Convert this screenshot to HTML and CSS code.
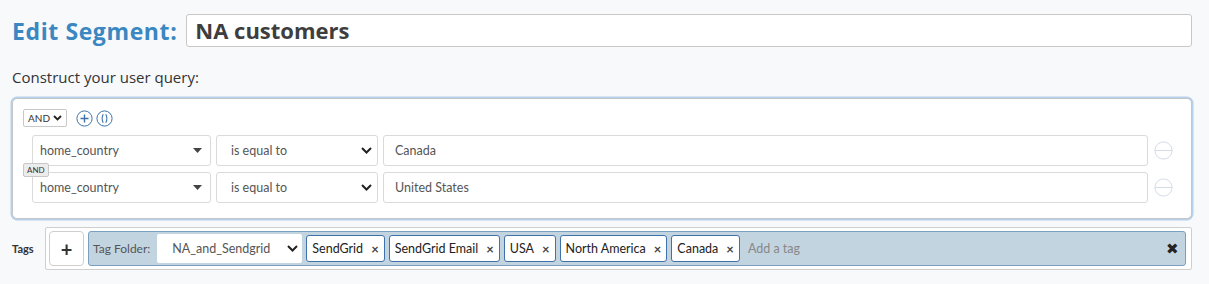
FILE: index.html
```html
<!DOCTYPE html>
<html lang="en">
<head>
    <meta charset="UTF-8">
    <title>Edit Segment</title>
    <link rel="stylesheet" href="styles.css">
</head>
<body>
    <!-- Titre + nom du segment -->
    <div class="header">
        <h1>Edit Segment:</h1>
        <div class="name-input">NA customers</div>
    </div>

    <p class="label">Construct your user query:</p>

    <!-- Constructeur de requete -->
    <div class="query-box">
        <div class="group-bar">
            <div class="mini-select">AND
                <svg width="9" height="6" viewBox="0 0 9 6"><path d="M1 1 L4.5 4.5 L8 1" fill="none" stroke="#222" stroke-width="1.8"/></svg>
            </div>
            <svg class="circle-icon" width="17" height="17" viewBox="0 0 17 17"><circle cx="8.5" cy="8.5" r="7.6" fill="none" stroke="#3d73a8" stroke-width="1"/><path d="M8.5 4.5 V12.5 M4.5 8.5 H12.5" stroke="#3d73a8" stroke-width="1.4"/></svg>
            <svg class="circle-icon" width="17" height="17" viewBox="0 0 17 17"><circle cx="8.5" cy="8.5" r="7.6" fill="none" stroke="#3d73a8" stroke-width="1"/><path d="M7.2 4.3 Q5 8.5 7.2 12.7 M9.8 4.3 Q12 8.5 9.8 12.7" fill="none" stroke="#3d73a8" stroke-width="1.1"/></svg>
        </div>

        <div class="rules">
            <span class="and-badge">AND</span>
            <div class="rule">
                <div class="field field-name">home_country
                    <svg width="9" height="5" viewBox="0 0 9 5"><path d="M0 0 H9 L4.5 5 Z" fill="#444"/></svg>
                </div>
                <div class="field field-op">is equal to
                    <svg width="11" height="7" viewBox="0 0 11 7"><path d="M1 1 L5.5 5.5 L10 1" fill="none" stroke="#222" stroke-width="2"/></svg>
                </div>
                <div class="field field-value">Canada</div>
                <svg class="minus" width="19" height="19" viewBox="0 0 19 19"><circle cx="9.5" cy="9.5" r="8.6" fill="none" stroke="#d3dbe6" stroke-width="1"/><path d="M1 9.5 H18" stroke="#d3dbe6" stroke-width="1"/></svg>
            </div>
            <div class="rule">
                <div class="field field-name">home_country
                    <svg width="9" height="5" viewBox="0 0 9 5"><path d="M0 0 H9 L4.5 5 Z" fill="#444"/></svg>
                </div>
                <div class="field field-op">is equal to
                    <svg width="11" height="7" viewBox="0 0 11 7"><path d="M1 1 L5.5 5.5 L10 1" fill="none" stroke="#222" stroke-width="2"/></svg>
                </div>
                <div class="field field-value">United States</div>
                <svg class="minus" width="19" height="19" viewBox="0 0 19 19"><circle cx="9.5" cy="9.5" r="8.6" fill="none" stroke="#d3dbe6" stroke-width="1"/><path d="M1 9.5 H18" stroke="#d3dbe6" stroke-width="1"/></svg>
            </div>
        </div>
    </div>

    <!-- Tags -->
    <div class="tags-row">
        <span class="tags-label">Tags</span>
        <div class="tags-box">
            <div class="add-btn">+</div>
            <div class="tag-bar">
                <span class="folder-label">Tag Folder:</span>
                <div class="folder-select">NA_and_Sendgrid
                    <svg width="11" height="7" viewBox="0 0 11 7"><path d="M1 1 L5.5 5.5 L10 1" fill="none" stroke="#222" stroke-width="2"/></svg>
                </div>
                <span class="tag">SendGrid <b>×</b></span>
                <span class="tag">SendGrid Email <b>×</b></span>
                <span class="tag">USA <b>×</b></span>
                <span class="tag">North America <b>×</b></span>
                <span class="tag">Canada <b>×</b></span>
                <span class="placeholder">Add a tag</span>
                <span class="clear">✖</span>
            </div>
        </div>
    </div>
</body>
</html>
```

FILE: styles.css
```css
body {
    font-family: Lato, "Open Sans", sans-serif;
    margin: 0;
    padding: 14px 17px 0 12px;
    background-color: #f8f9fb;
    color: #333;
}

/* En-tete */
.header {
    display: flex;
    align-items: center;
    gap: 9px;
}

h1 {
    margin: 0;
    font-family: "Open Sans", sans-serif;
    font-size: 23px;
    letter-spacing: 0.6px;
    font-weight: bold;
    color: #3a87c1;
    white-space: nowrap;
}

.name-input {
    flex: 1;
    height: 31px;
    line-height: 31px;
    border: 1px solid #c8c8c8;
    border-radius: 3px;
    background: white;
    padding-left: 8px;
    font-family: "Open Sans", sans-serif;
    font-size: 22px;
    font-weight: bold;
    color: #3e3e3e;
}

.label {
    margin: 20px 0 10px;
    font-family: "Open Sans", sans-serif;
    font-size: 15px;
    line-height: 21px;
    color: #333;
}

/* Boite de requete */
.query-box {
    background: white;
    border: 1px solid #c4c6c8;
    box-shadow: 0 0 0 1.5px #b7d0ec;
    border-radius: 5px;
    padding: 10px 18px 15px 10px;
}

.group-bar {
    display: flex;
    align-items: center;
    gap: 3px;
}

.mini-select {
    display: flex;
    align-items: center;
    gap: 3px;
    height: 16px;
    padding: 0 4px;
    border: 1px solid #c8c8c8;
    border-radius: 2px;
    font-size: 10px;
    color: #333;
    margin-right: 6px;
}

.rules {
    position: relative;
    margin: 8px 0 0 9px;
    display: flex;
    flex-direction: column;
    gap: 6px;
}

.and-badge {
    position: absolute;
    left: -9px;
    top: 28px;
    font-size: 8px;
    color: #333;
    background: #ececec;
    border: 1px solid #c8c8c8;
    border-radius: 2px;
    padding: 2px 3px;
    line-height: 8px;
}

.rule {
    display: flex;
    align-items: center;
    gap: 5px;
}

.field {
    box-sizing: border-box;
    height: 31px;
    border: 1px solid #dadada;
    border-radius: 3px;
    background: white;
    font-size: 12.5px;
    color: #555;
    display: flex;
    align-items: center;
    justify-content: space-between;
}

.field-name {
    width: 179px;
    padding: 0 8px 0 7px;
}

.field-op {
    width: 162px;
    padding: 0 5px 0 14px;
}

.field-value {
    flex: 1;
    padding-left: 11px;
}

.minus {
    margin-left: 1px;
}

/* Tags */
.tags-row {
    display: flex;
    align-items: center;
    margin-top: 8px;
}

.tags-label {
    width: 33px;
    font-size: 11px;
    font-weight: bold;
    color: #333;
}

.tags-box {
    flex: 1;
    display: flex;
    gap: 4px;
    border: 1px solid #cfcfcf;
    border-radius: 2px;
    padding: 3px 5px 3px 3px;
    background: white;
}

.add-btn {
    width: 33px;
    height: 33px;
    border: 1px solid #cfcfcf;
    border-radius: 4px;
    display: flex;
    align-items: center;
    justify-content: center;
    font-size: 20px;
    font-weight: bold;
    color: #333;
}

.tag-bar {
    flex: 1;
    display: flex;
    align-items: center;
    gap: 4px;
    background: #c3d4e1;
    border: 1px solid #7d9fbf;
    border-radius: 3px;
    padding: 0 4px;
}

.folder-label {
    font-size: 12px;
    color: #555;
    margin-right: 3px;
}

.folder-select {
    box-sizing: border-box;
    width: 145px;
    height: 29px;
    background: white;
    border-radius: 2px;
    display: flex;
    align-items: center;
    justify-content: space-between;
    padding: 0 4px 0 15px;
    font-size: 12.5px;
    color: #555;
}

.tag {
    height: 25px;
    display: flex;
    align-items: center;
    gap: 8px;
    background: white;
    border: 1px solid #3f72a8;
    border-radius: 3px;
    padding: 0 5px;
    font-size: 12.5px;
    color: #222;
}

.tag b {
    font-size: 13px;
    color: #444;
}

.placeholder {
    margin-left: 4px;
    font-size: 12.5px;
    color: #888;
}

.clear {
    margin-left: auto;
    margin-right: 2px;
    font-size: 15px;
    color: #222;
}
```
